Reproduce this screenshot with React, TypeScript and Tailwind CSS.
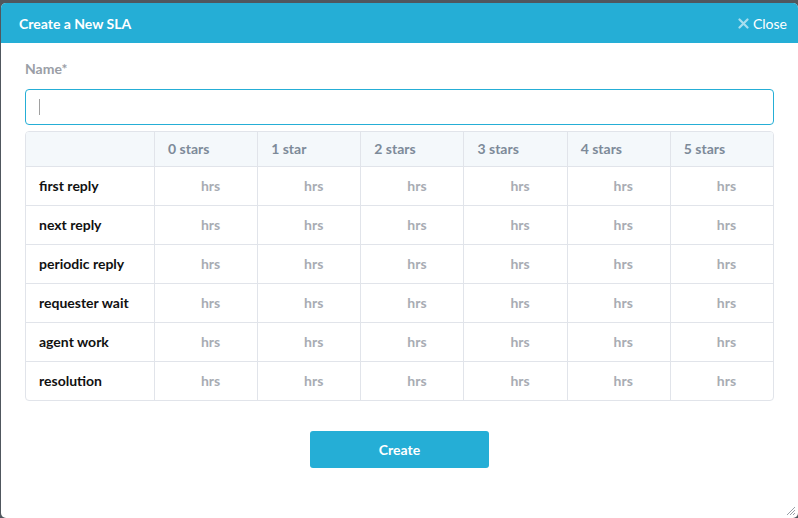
import React from "react";

const cols = ["0 stars", "1 star", "2 stars", "3 stars", "4 stars", "5 stars"];
const rows = ["first reply", "next reply", "periodic reply", "requester wait", "agent work", "resolution"];

export default function App() {
  return (
    <div className="w-[798px] h-[518px] bg-[#50575e] pl-[1px] pt-[3px] overflow-hidden" style={{ fontFamily: "Lato, 'Open Sans', sans-serif" }}>
      <div className="relative w-[797px] h-[515px] bg-white rounded-[5px] overflow-hidden flex flex-col">
        <div className="h-[40px] bg-[#25aed6] flex items-center justify-between pl-[18px] pr-[11px] shrink-0">
          <div className="text-white font-bold text-[14px]">Create a New SLA</div>
          <div className="flex items-center gap-[4px] text-white text-[14px]">
            <svg width="11" height="11" viewBox="0 0 11 11" className="opacity-60">
              <path d="M1.5 1.5 L9.5 9.5 M9.5 1.5 L1.5 9.5" stroke="white" strokeWidth="2.2" strokeLinecap="round" />
            </svg>
            <span>Close</span>
          </div>
        </div>
        <div className="px-[24px] pt-[17px]">
          <div className="text-[14px] font-bold text-[#9a9ea6] leading-[18px]">Name*</div>
          <div className="mt-[11px] h-[36px] border border-[#25aed6] rounded-[4px] flex items-center pl-[13px]">
            <div className="w-[1px] h-[16px] bg-[#a0a0a0]" />
          </div>
          <div className="mt-[6px] border border-[#e1e4ea] rounded-[4px] overflow-hidden">
            <div className="grid grid-cols-[128px_repeat(6,1fr)] h-[35px] bg-[#f4f8fb] border-b border-[#e1e4ea]">
              <div />
              {cols.map((c) => (
                <div key={c} className="border-l border-[#e1e4ea] flex items-center pl-[13px] pb-[1px] text-[14px] font-bold text-[#7d8a99]">
                  {c}
                </div>
              ))}
            </div>
            {rows.map((r, i) => (
              <div key={r} className={`grid grid-cols-[128px_repeat(6,1fr)] ${i < rows.length - 1 ? "h-[39px] border-b border-[#e1e4ea]" : "h-[38px]"}`}>
                <div className="flex items-center pl-[13px] pb-[2px] text-[14px] font-bold text-[#111]">{r}</div>
                {cols.map((c) => (
                  <div key={c} className="border-l border-[#e1e4ea] flex items-center justify-center pl-[9px] pb-[2px] text-[14px] font-bold text-[#a8acb3]">
                    hrs
                  </div>
                ))}
              </div>
            ))}
          </div>
          <div className="flex justify-center mt-[30px]">
            <button className="w-[179px] h-[37px] bg-[#25aed6] rounded-[3px] text-white font-bold text-[14px]">Create</button>
          </div>
        </div>
        <svg className="absolute right-[2px] bottom-[2px]" width="10" height="10" viewBox="0 0 10 10">
          <path d="M9 1 L1 9 M9 4 L4 9 M9 7 L7 9" stroke="#9aa0a8" strokeWidth="1" />
        </svg>
      </div>
    </div>
  );
}
